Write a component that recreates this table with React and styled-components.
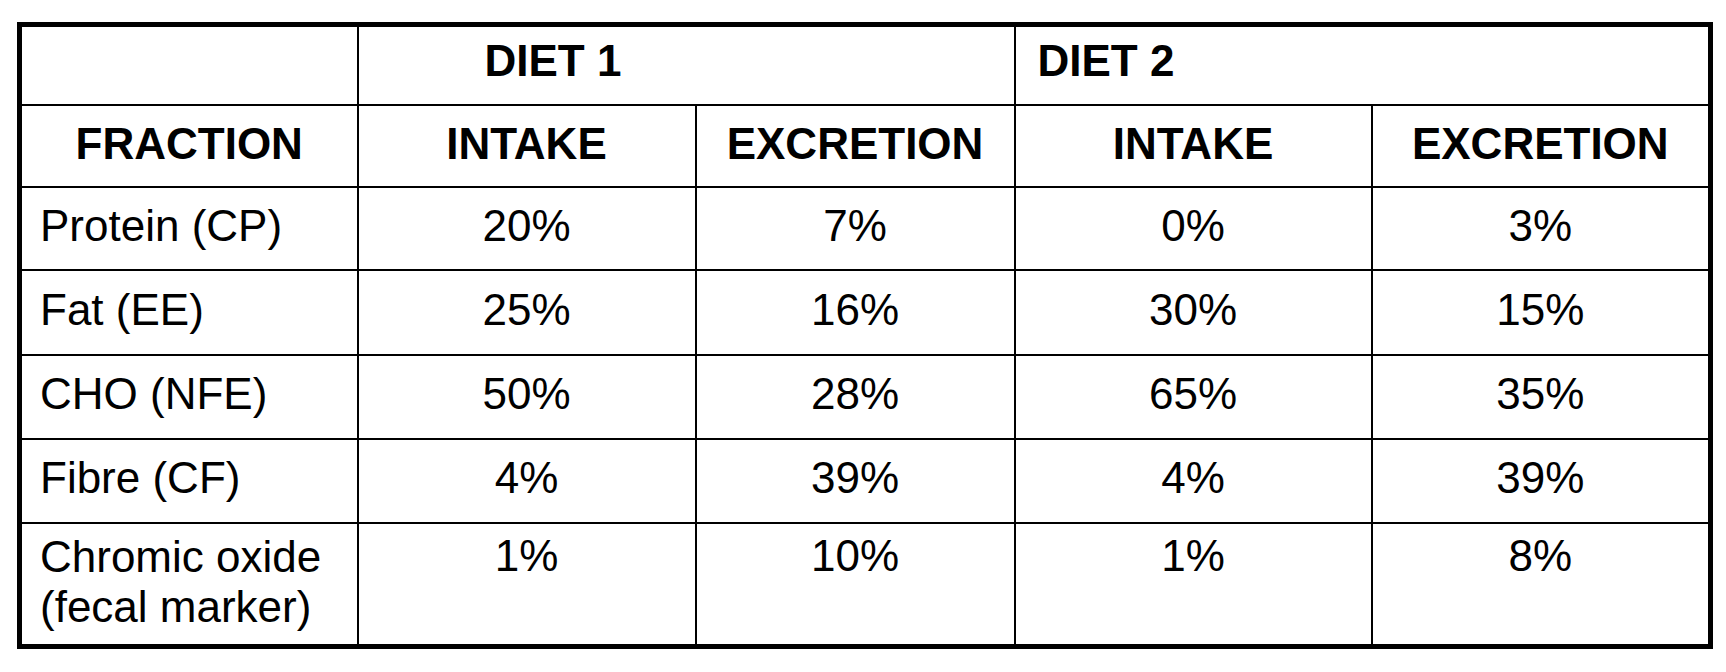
import styled, { createGlobalStyle } from 'styled-components';

const GlobalStyle = createGlobalStyle`
  html, body {
    margin: 0;
    padding: 0;
    background: #fff;
  }
  body {
    font-family: "Liberation Sans", Arial, Helvetica, sans-serif;
    color: #000;
  }
`;

// rows of the table, the last one wraps onto two lines
const rows = [
  { label: 'Protein (CP)', values: ['20%', '7%', '0%', '3%'], h: 83 },
  { label: 'Fat (EE)', values: ['25%', '16%', '30%', '15%'], h: 85 },
  { label: 'CHO (NFE)', values: ['50%', '28%', '65%', '35%'], h: 84 },
  { label: 'Fibre (CF)', values: ['4%', '39%', '4%', '39%'], h: 84 },
  { label: 'Chromic oxide (fecal marker)', values: ['1%', '10%', '1%', '8%'], h: 124, top: true },
];

const Page = styled.div`
  padding: 22px 0 0 17px;
`;

const Table = styled.table`
  border-collapse: collapse;
  table-layout: fixed;
  width: 1696px;
  border: 5px solid #000;
  font-size: 44px;
  line-height: 48px;
`;

const Row = styled.tr`
  height: ${(p) => p.$h}px;
`;

const HeadCell = styled.th`
  border: 2px solid #000;
  font-weight: 700;
  text-align: ${(p) => (p.$left ? 'left' : 'center')};
  padding: 0 0 ${(p) => p.$pb ?? 4}px ${(p) => p.$pl || 0}px;
  vertical-align: middle;
`;

const Cell = styled.td`
  border: 2px solid #000;
  font-weight: 400;
  text-align: ${(p) => (p.$left ? 'left' : 'center')};
  padding: ${(p) => (p.$top ? '8px 0 0' : '0 0 5px')};
  padding-left: ${(p) => (p.$left ? 18 : 0)}px;
  vertical-align: ${(p) => (p.$top ? 'top' : 'middle')};
`;

const Label = styled.span`
  display: block;
  width: ${(p) => (p.$narrow ? '300px' : 'auto')};
  line-height: ${(p) => (p.$narrow ? 50 : 48)}px;
`;

export default function App() {
  return (
    <Page>
      <GlobalStyle />
      <Table>
        <colgroup>
          <col style={{ width: 338 }} />
          <col style={{ width: 338 }} />
          <col style={{ width: 319 }} />
          <col style={{ width: 357 }} />
          <col style={{ width: 339 }} />
        </colgroup>
        <thead>
          <Row $h={80}>
            <HeadCell />
            <HeadCell colSpan={2} $left $pl={126} $pb={9}>DIET 1</HeadCell>
            <HeadCell colSpan={2} $left $pl={22} $pb={9}>DIET 2</HeadCell>
          </Row>
          <Row $h={82}>
            <HeadCell>FRACTION</HeadCell>
            <HeadCell>INTAKE</HeadCell>
            <HeadCell>EXCRETION</HeadCell>
            <HeadCell>INTAKE</HeadCell>
            <HeadCell>EXCRETION</HeadCell>
          </Row>
        </thead>
        <tbody>
          {rows.map((r) => (
            <Row key={r.label} $h={r.h}>
              <Cell $left $top={r.top}>
                <Label $narrow={r.top}>{r.label}</Label>
              </Cell>
              {r.values.map((v, i) => (
                <Cell key={i} $top={r.top}>{v}</Cell>
              ))}
            </Row>
          ))}
        </tbody>
      </Table>
    </Page>
  );
}
